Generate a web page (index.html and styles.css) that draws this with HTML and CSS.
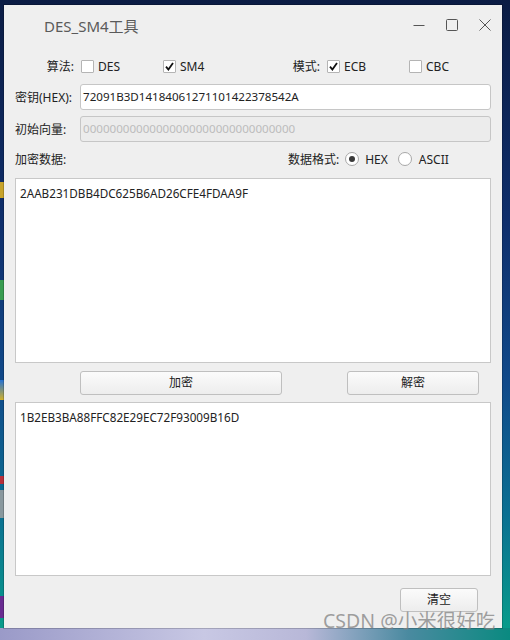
FILE: index.html
```html
<!DOCTYPE html>
<html lang="zh">
<head>
<meta charset="utf-8">
<link rel="stylesheet" href="styles.css">
</head>
<body>
<div class="desk">
  <div class="icon i1"></div><div class="icon i2"></div><div class="icon i3"></div><div class="icon i4"></div><div class="icon i5"></div><div class="icon i6"></div>
  <div class="bottom-strip"></div>
  <div class="window">
    <div class="titlebar">
      <div class="title">DES_SM4工具</div>
      <div class="wctl">
        <svg class="wbtn" width="14" height="14" viewBox="0 0 14 14"><path d="M1.5 7.5H12.5" stroke="#555" stroke-width="1" fill="none"/></svg>
        <svg class="wbtn" width="14" height="14" viewBox="0 0 14 14"><rect x="1.5" y="1.5" width="11" height="11" rx="1" stroke="#555" stroke-width="1" fill="none"/></svg>
        <svg class="wbtn" width="14" height="14" viewBox="0 0 14 14"><path d="M1.5 1.5L12.5 12.5M12.5 1.5L1.5 12.5" stroke="#555" stroke-width="1" fill="none"/></svg>
      </div>
    </div>
    <div class="content">
      <div class="row row1">
        <div class="lbl lbl-r w59">算法:</div>
        <div class="opt first w82"><span class="cb"></span><span>DES</span></div>
        <div class="opt w100"><span class="cb"><svg width="11" height="11" viewBox="0 0 11 11"><path d="M2 5.6L4.4 8.6L9 2" stroke="#111" stroke-width="1.8" fill="none"/></svg></span><span>SM4</span></div>
        <div class="lbl lbl-r w57">模式:</div>
        <div class="opt first w82"><span class="cb"><svg width="11" height="11" viewBox="0 0 11 11"><path d="M2 5.6L4.4 8.6L9 2" stroke="#111" stroke-width="1.8" fill="none"/></svg></span><span>ECB</span></div>
        <div class="opt"><span class="cb"></span><span>CBC</span></div>
      </div>
      <div class="row field">
        <div class="lbl w65">密钥(HEX):</div>
        <div class="input">72091B3D14184061271101422378542A</div>
      </div>
      <div class="row field">
        <div class="lbl w65">初始向量:</div>
        <div class="input disabled">00000000000000000000000000000000</div>
      </div>
      <div class="row row4">
        <div class="lbl w273">加密数据:</div>
        <div class="lbl">数据格式:</div>
        <span class="radio on"></span><span class="rtxt">HEX</span>
        <span class="radio second"></span><span class="rtxt">ASCII</span>
      </div>
      <div class="area a1">2AAB231DBB4DC625B6AD26CFE4FDAA9F</div>
      <div class="row btnrow">
        <div class="btn b-enc">加密</div>
        <div class="btn b-dec">解密</div>
      </div>
      <div class="area a2">1B2EB3BA88FFC82E29EC72F93009B16D</div>
      <div class="row lastrow">
        <div class="btn b-clr">清空</div>
      </div>
    </div>
  </div>
  <div class="watermark">CSDN @小米很好吃</div>
</div>
</body>
</html>
```
FILE: styles.css
```css
* { box-sizing: border-box; }
html, body { margin: 0; padding: 0; }
body {
  width: 510px;
  height: 640px;
  overflow: hidden;
  font-family: "Noto Sans", "Noto Sans CJK SC", sans-serif;
  font-size: 12px;
  color: #222;
}
.desk {
  position: relative;
  width: 510px;
  height: 640px;
  padding: 5px 0 0 4px;
  background:
    linear-gradient(180deg, #0b1c44 0%, #0f2f6c 35%, #114a8a 60%, #0b6f92 80%, #08a08a 100%);
}
.icon { position: absolute; left: 0; width: 4px; opacity: 0.85; }
.i1 { top: 182px; height: 16px; background: #e8b820; }
.i2 { top: 280px; height: 20px; background: #3fae4a; }
.i3 { top: 380px; height: 20px; background: linear-gradient(#2b7be0, #f2c21c); }
.i4 { top: 476px; height: 8px; background: #d8282e; }
.i5 { top: 490px; height: 28px; background: #a0a0a0; }
.i6 { top: 596px; height: 22px; background: #7a1a92; }
.bottom-strip {
  position: absolute;
  left: 0; top: 628px;
  width: 510px; height: 12px;
  background: linear-gradient(90deg, #9a9ac8 0%, #c8c8e4 40%, #b8b8d8 60%, #4a8aa0 80%, #0a8a80 100%);
}
.window {
  position: relative;
  width: 498px;
  height: 623px;
  background: #efefef;
  box-shadow: 0 0 0 1px rgba(0,0,0,0.18);
  display: flex;
  flex-direction: column;
}
.titlebar {
  height: 40px;
  display: flex;
  align-items: center;
  padding-left: 40px;
  padding-right: 10px;
}
.title {
  font-size: 15px;
  color: #5a5a5a;
  flex: 1;
}
.wctl { display: flex; align-items: center; gap: 19px; }
.wbtn { display: block; }
.content {
  padding: 0 11px;
  display: flex;
  flex-direction: column;
}
.row { display: flex; align-items: center; }
.row1 { margin-top: 9px; height: 24px; }
.lbl { white-space: nowrap; color: #222; }
.lbl-r { text-align: right; }
.w59 { width: 59px; }
.w57 { width: 57px; }
.w65 { width: 65px; }
.w273 { width: 273px; }
.opt { display: flex; align-items: center; }
.opt.first { margin-left: 7px; }
.w82 { width: 82px; }
.w100 { width: 100px; }
.cb {
  width: 13px; height: 13px;
  border: 1px solid #b4b4b4;
  border-radius: 1px;
  background: #fff;
  margin-right: 4px;
  display: flex;
  align-items: center;
  justify-content: center;
}
.cb svg { display: block; }
.field { margin-top: 6px; height: 26px; }
.input {
  flex: 1;
  height: 26px;
  background: #fff;
  border: 1px solid #c6c6c6;
  border-radius: 3px;
  padding-left: 2px;
  line-height: 24px;
  font-size: 11.6px;
  color: #222;
}
.input.disabled {
  background: #ececec;
  color: #bcbcbc;
}
.row4 { margin-top: 6px; height: 22px; }
.radio {
  width: 14px; height: 14px;
  border: 1px solid #a8a8a8;
  border-radius: 50%;
  background: #fff;
  margin-left: 6px;
  margin-right: 6px;
  position: relative;
}
.radio.on::after {
  content: "";
  position: absolute;
  left: 3px; top: 3px;
  width: 6px; height: 6px;
  border-radius: 50%;
  background: #3a3a3a;
}
.radio.second { margin-left: 10px; margin-right: 7px; }
.area {
  background: #fff;
  border: 1px solid #c8c8c8;
  padding: 6px 4px;
  line-height: 16px;
  font-size: 11.7px;
  color: #222;
}
.a1 { margin-top: 8px; height: 185px; }
.btnrow { margin-top: 8px; height: 24px; }
.btn {
  height: 24px;
  border: 1px solid #bfbfbf;
  border-radius: 3px;
  background: linear-gradient(#fbfbfb, #ededed);
  display: flex;
  align-items: center;
  justify-content: center;
  color: #222;
  line-height: 16px;
}
.b-enc { margin-left: 65px; width: 202px; }
.b-dec { margin-left: 65px; width: 132px; }
.a2 { margin-top: 7px; height: 174px; }
.lastrow { margin-top: 12px; height: 24px; justify-content: flex-end; padding-right: 13px; }
.b-clr { width: 78px; }
.watermark {
  position: absolute;
  left: 323px;
  top: 611px;
  font-size: 19.5px;
  line-height: 20px;
  color: rgba(130,130,130,0.75);
  white-space: nowrap;
}
```
